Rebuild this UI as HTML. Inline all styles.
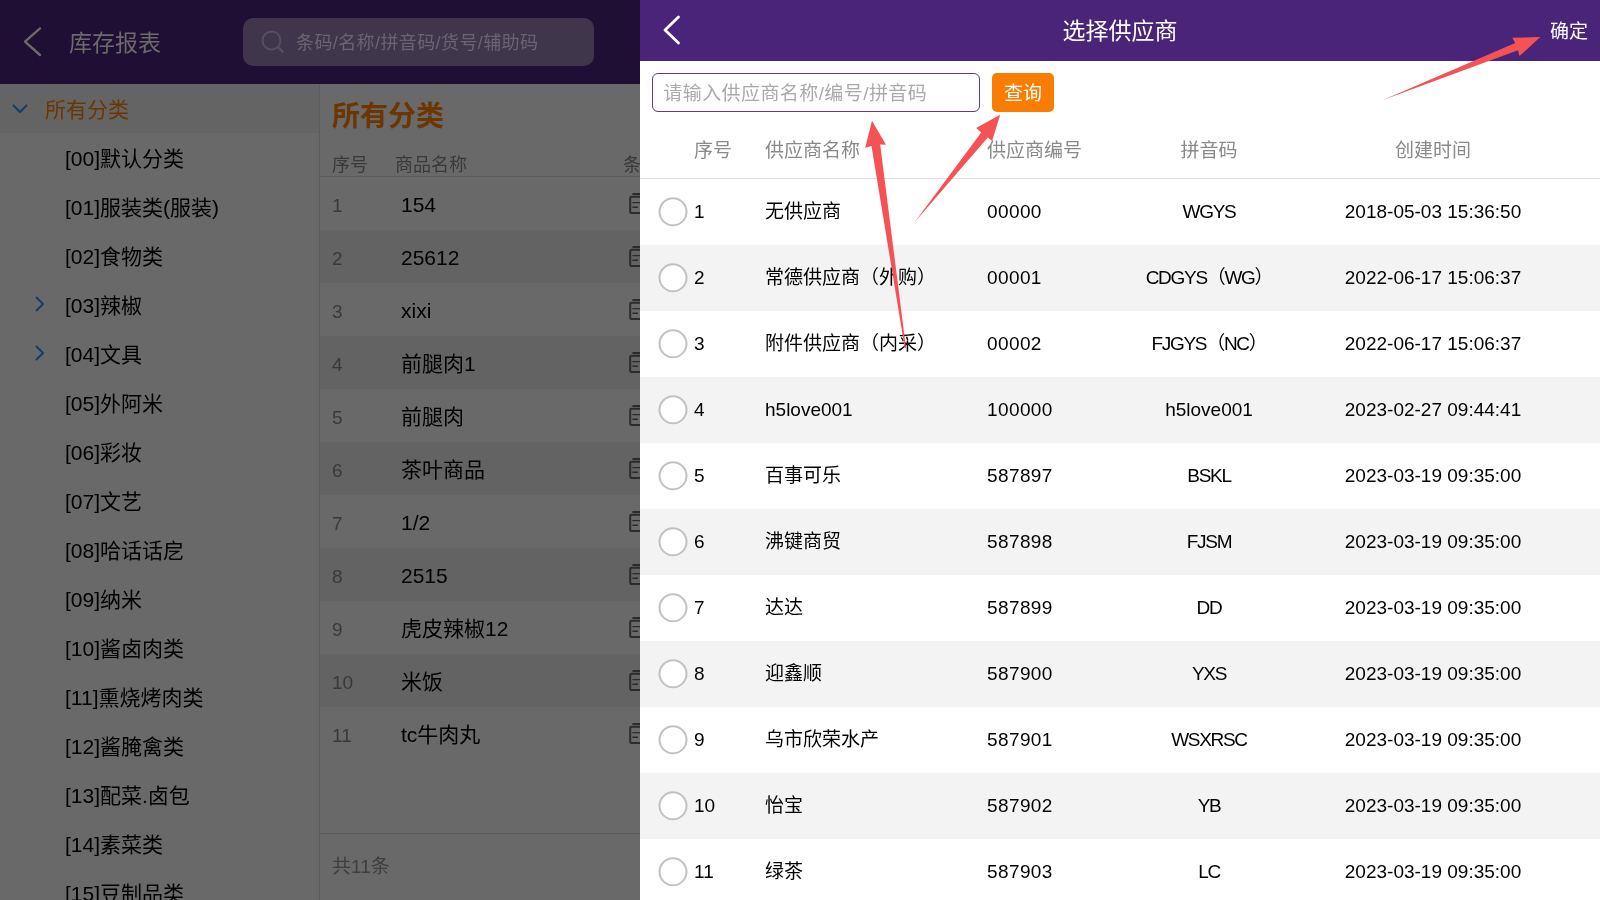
<!DOCTYPE html>
<html lang="zh-CN"><head><meta charset="utf-8"><title>选择供应商</title>
<style>
*{box-sizing:border-box;margin:0;padding:0}
html,body{width:1600px;height:900px;overflow:hidden;background:#fff}
body{position:relative;font-family:"Liberation Sans","Noto Sans CJK SC",sans-serif;color:#000}
#left{position:absolute;left:0;top:0;width:640px;height:900px;background:#696969;overflow:hidden}
.lhead{position:absolute;left:0;top:0;width:640px;height:84px;background:#1f0f34}
.lback{position:absolute;left:20px;top:25px}
.ltitle{position:absolute;left:69px;top:23px;height:40px;line-height:40px;font-size:23px;color:#6b6b6b}
.lsearch{position:absolute;left:243px;top:18px;width:351px;height:48px;border-radius:10px;background:#40364c}
.lsearch svg{position:absolute;left:16px;top:10.4px}
.lsearch span{position:absolute;left:53px;top:0;line-height:50px;font-size:18px;color:#6b6472;white-space:nowrap;letter-spacing:.4px}
.side{position:absolute;left:0;top:84px;width:319px;height:816px;background:#696969}
.sall{position:absolute;left:0;top:0;width:319px;height:49px;background:#646464}
.sall svg{position:absolute;left:11.5px;top:20px}
.sall span{position:absolute;left:45px;top:0;line-height:51px;font-size:21px;color:#6b3600}
.cat{position:absolute;left:0;width:319px;height:49px;line-height:51px;padding-left:65px;font-size:21px;color:#000;white-space:nowrap}
.cat .exp{position:absolute;left:34.6px;top:16.3px}
.vline{position:absolute;left:319px;top:84px;width:1px;height:816px;background:#5c5c5c}
.main{position:absolute;left:320px;top:84px;width:320px;height:816px;background:#696969;overflow:hidden}
.mtitle{position:absolute;left:12px;top:12px;line-height:42px;font-size:28px;font-weight:bold;color:#6b3600}
.mth{position:absolute;left:0;top:66px;width:320px;height:30px;line-height:30px;font-size:18px;color:#393939}
.mth span{position:absolute;top:0;white-space:nowrap}
.mth .c1{left:12px}.mth .c2{left:75px}.mth .c3{left:303px}
.mline{position:absolute;left:0;width:320px;height:1px;background:#5a5a5a}
.mrow{position:absolute;left:0;width:320px;height:53px;line-height:55px}
.mrow.alt{background:#636363}
.mrow .n{position:absolute;left:12px;top:1px;font-size:19px;color:#393939}
.mrow .g{position:absolute;left:81px;top:0;font-size:21px;color:#000;white-space:nowrap}
.mrow .ico{position:absolute;left:308px;top:15px}
.mtotal{position:absolute;left:12px;top:768px;line-height:30px;font-size:19px;color:#3e3e3e}
#right{position:absolute;left:640px;top:0;width:960px;height:900px;background:#fff;overflow:hidden}
.rhead{position:absolute;left:0;top:0;width:960px;height:61px;background:#4a2479}
.rback{position:absolute;left:21px;top:14.4px}
.rtitle{position:absolute;left:0;top:0;width:960px;text-align:center;line-height:63px;font-size:23px;color:#fff}
.rok{position:absolute;right:12px;top:0;line-height:63px;font-size:19px;color:#fff}
.rinput{position:absolute;left:12px;top:73px;width:328px;height:39px;border:1.3px solid #5b3a8e;border-radius:6px;padding-left:10.3px;letter-spacing:.42px;line-height:39px;font-size:19px;color:#aaa;white-space:nowrap;background:#fff}
.rbtn{position:absolute;left:352px;top:73px;width:62px;height:39px;border-radius:5px;background:#f97d00;color:#fff;font-size:19px;text-align:center;line-height:42px}
.rth{position:absolute;left:0;top:120px;width:960px;height:59px;border-bottom:1px solid #dcdcdc;line-height:61px;font-size:19px;color:#8a8a8a}
.rth span,.rrow span{position:absolute;top:0;white-space:nowrap}
.a{left:54px}.b{left:125px}.c{left:347px}
.rrow .c{letter-spacing:.4px}
.up{letter-spacing:-1.3px}
.d{left:469px;width:200px;text-align:center}
.e{left:693px;width:200px;text-align:center}
.rrow{position:absolute;left:0;width:960px;height:66px;line-height:66px;font-size:19px;color:#000}
.rrow.alt{background:#f3f3f3}
.rad{position:absolute;left:19px;top:19px;width:29px;height:29px;border:2px solid #c2c2c2;border-radius:50%;background:#fff;transform:translate(-.5px,-.7px)}
#arrows{position:absolute;left:0;top:0;pointer-events:none}
#left,#right{will-change:transform}

</style></head><body>
<div id="left">
<div class="lhead"></div>
<svg class="lback" width="24" height="34" viewBox="0 0 24 34"><path d="M20 3.4 L5 16.6 L20 30" fill="none" stroke="#6b6b6b" stroke-width="2.4" stroke-linecap="round" stroke-linejoin="round"/></svg>
<div class="ltitle">库存报表</div>
<div class="lsearch"><svg width="30" height="30" viewBox="0 0 30 30"><circle cx="12.5" cy="12.5" r="9" fill="none" stroke="#584e64" stroke-width="2"/><path d="M19.3 19.3 L23.6 23.6" stroke="#584e64" stroke-width="2.4" stroke-linecap="round"/></svg><span>条码/名称/拼音码/货号/辅助码</span></div>
<div class="side">
<div class="sall"><svg width="16" height="10" viewBox="0 0 16 10"><path d="M1.5 1.5 L8 8 L14.5 1.5" fill="none" stroke="#133f66" stroke-width="2" stroke-linecap="round" stroke-linejoin="round"/></svg><span>所有分类</span></div>
<div class="cat" style="top:49px">[00]默认分类</div>
<div class="cat" style="top:98px">[01]服装类(服装)</div>
<div class="cat" style="top:147px">[02]食物类</div>
<div class="cat" style="top:196px"><svg class="exp" width="10" height="16" viewBox="0 0 10 16"><path d="M1.5 1.5 L8 8 L1.5 14.5" fill="none" stroke="#133f66" stroke-width="2" stroke-linecap="round" stroke-linejoin="round"/></svg>[03]辣椒</div>
<div class="cat" style="top:245px"><svg class="exp" width="10" height="16" viewBox="0 0 10 16"><path d="M1.5 1.5 L8 8 L1.5 14.5" fill="none" stroke="#133f66" stroke-width="2" stroke-linecap="round" stroke-linejoin="round"/></svg>[04]文具</div>
<div class="cat" style="top:294px">[05]外阿米</div>
<div class="cat" style="top:343px">[06]彩妆</div>
<div class="cat" style="top:392px">[07]文艺</div>
<div class="cat" style="top:441px">[08]哈话话戹</div>
<div class="cat" style="top:490px">[09]纳米</div>
<div class="cat" style="top:539px">[10]酱卤肉类</div>
<div class="cat" style="top:588px">[11]熏烧烤肉类</div>
<div class="cat" style="top:637px">[12]酱腌禽类</div>
<div class="cat" style="top:686px">[13]配菜.卤包</div>
<div class="cat" style="top:735px">[14]素菜类</div>
<div class="cat" style="top:784px">[15]豆制品类</div>
</div>
<div class="vline"></div>
<div class="main">
<div class="mtitle">所有分类</div>
<div class="mth"><span class="c1">序号</span><span class="c2">商品名称</span><span class="c3">条码</span></div>
<div class="mline" style="top:92px"></div>
<div class="mrow" style="top:93px"><span class="n">1</span><span class="g">154</span><svg class="ico" width="22" height="24" viewBox="0 0 22 24"><rect x="2.2" y="4.8" width="20" height="16.2" rx="1.2" fill="none" stroke="#2b2b2b" stroke-width="2"/><path d="M4.4 2 H14" stroke="#2b2b2b" stroke-width="2"/><path d="M4.4 10.65 H13 M4.4 15.2 H10" stroke="#2b2b2b" stroke-width="1.4"/></svg></div>
<div class="mrow alt" style="top:146px"><span class="n">2</span><span class="g">25612</span><svg class="ico" width="22" height="24" viewBox="0 0 22 24"><rect x="2.2" y="4.8" width="20" height="16.2" rx="1.2" fill="none" stroke="#2b2b2b" stroke-width="2"/><path d="M4.4 2 H14" stroke="#2b2b2b" stroke-width="2"/><path d="M4.4 10.65 H13 M4.4 15.2 H10" stroke="#2b2b2b" stroke-width="1.4"/></svg></div>
<div class="mrow" style="top:199px"><span class="n">3</span><span class="g">xixi</span><svg class="ico" width="22" height="24" viewBox="0 0 22 24"><rect x="2.2" y="4.8" width="20" height="16.2" rx="1.2" fill="none" stroke="#2b2b2b" stroke-width="2"/><path d="M4.4 2 H14" stroke="#2b2b2b" stroke-width="2"/><path d="M4.4 10.65 H13 M4.4 15.2 H10" stroke="#2b2b2b" stroke-width="1.4"/></svg></div>
<div class="mrow alt" style="top:252px"><span class="n">4</span><span class="g">前腿肉1</span><svg class="ico" width="22" height="24" viewBox="0 0 22 24"><rect x="2.2" y="4.8" width="20" height="16.2" rx="1.2" fill="none" stroke="#2b2b2b" stroke-width="2"/><path d="M4.4 2 H14" stroke="#2b2b2b" stroke-width="2"/><path d="M4.4 10.65 H13 M4.4 15.2 H10" stroke="#2b2b2b" stroke-width="1.4"/></svg></div>
<div class="mrow" style="top:305px"><span class="n">5</span><span class="g">前腿肉</span><svg class="ico" width="22" height="24" viewBox="0 0 22 24"><rect x="2.2" y="4.8" width="20" height="16.2" rx="1.2" fill="none" stroke="#2b2b2b" stroke-width="2"/><path d="M4.4 2 H14" stroke="#2b2b2b" stroke-width="2"/><path d="M4.4 10.65 H13 M4.4 15.2 H10" stroke="#2b2b2b" stroke-width="1.4"/></svg></div>
<div class="mrow alt" style="top:358px"><span class="n">6</span><span class="g">茶叶商品</span><svg class="ico" width="22" height="24" viewBox="0 0 22 24"><rect x="2.2" y="4.8" width="20" height="16.2" rx="1.2" fill="none" stroke="#2b2b2b" stroke-width="2"/><path d="M4.4 2 H14" stroke="#2b2b2b" stroke-width="2"/><path d="M4.4 10.65 H13 M4.4 15.2 H10" stroke="#2b2b2b" stroke-width="1.4"/></svg></div>
<div class="mrow" style="top:411px"><span class="n">7</span><span class="g">1/2</span><svg class="ico" width="22" height="24" viewBox="0 0 22 24"><rect x="2.2" y="4.8" width="20" height="16.2" rx="1.2" fill="none" stroke="#2b2b2b" stroke-width="2"/><path d="M4.4 2 H14" stroke="#2b2b2b" stroke-width="2"/><path d="M4.4 10.65 H13 M4.4 15.2 H10" stroke="#2b2b2b" stroke-width="1.4"/></svg></div>
<div class="mrow alt" style="top:464px"><span class="n">8</span><span class="g">2515</span><svg class="ico" width="22" height="24" viewBox="0 0 22 24"><rect x="2.2" y="4.8" width="20" height="16.2" rx="1.2" fill="none" stroke="#2b2b2b" stroke-width="2"/><path d="M4.4 2 H14" stroke="#2b2b2b" stroke-width="2"/><path d="M4.4 10.65 H13 M4.4 15.2 H10" stroke="#2b2b2b" stroke-width="1.4"/></svg></div>
<div class="mrow" style="top:517px"><span class="n">9</span><span class="g">虎皮辣椒12</span><svg class="ico" width="22" height="24" viewBox="0 0 22 24"><rect x="2.2" y="4.8" width="20" height="16.2" rx="1.2" fill="none" stroke="#2b2b2b" stroke-width="2"/><path d="M4.4 2 H14" stroke="#2b2b2b" stroke-width="2"/><path d="M4.4 10.65 H13 M4.4 15.2 H10" stroke="#2b2b2b" stroke-width="1.4"/></svg></div>
<div class="mrow alt" style="top:570px"><span class="n">10</span><span class="g">米饭</span><svg class="ico" width="22" height="24" viewBox="0 0 22 24"><rect x="2.2" y="4.8" width="20" height="16.2" rx="1.2" fill="none" stroke="#2b2b2b" stroke-width="2"/><path d="M4.4 2 H14" stroke="#2b2b2b" stroke-width="2"/><path d="M4.4 10.65 H13 M4.4 15.2 H10" stroke="#2b2b2b" stroke-width="1.4"/></svg></div>
<div class="mrow" style="top:623px"><span class="n">11</span><span class="g">tc牛肉丸</span><svg class="ico" width="22" height="24" viewBox="0 0 22 24"><rect x="2.2" y="4.8" width="20" height="16.2" rx="1.2" fill="none" stroke="#2b2b2b" stroke-width="2"/><path d="M4.4 2 H14" stroke="#2b2b2b" stroke-width="2"/><path d="M4.4 10.65 H13 M4.4 15.2 H10" stroke="#2b2b2b" stroke-width="1.4"/></svg></div>
<div class="mline" style="top:749px"></div>
<div class="mtotal">共11条</div>
</div>
</div>
<div id="right">
<div class="rhead"><svg class="rback" width="22" height="32" viewBox="0 0 22 32"><path d="M17.5 3 L4 16 L17.5 29" fill="none" stroke="#fff" stroke-width="2.8" stroke-linecap="round" stroke-linejoin="round"/></svg><div class="rtitle">选择供应商</div><div class="rok">确定</div></div>
<div class="rinput">请输入供应商名称/编号/拼音码</div>
<div class="rbtn">查询</div>
<div class="rth"><span class="a">序号</span><span class="b">供应商名称</span><span class="c">供应商编号</span><span class="d">拼音码</span><span class="e">创建时间</span></div>
<div class="rrow" style="top:179px"><i class="rad"></i><span class="a">1</span><span class="b">无供应商</span><span class="c">00000</span><span class="d up">WGYS</span><span class="e">2018-05-03 15:36:50</span></div>
<div class="rrow alt" style="top:245px"><i class="rad"></i><span class="a">2</span><span class="b">常德供应商（外购）</span><span class="c">00001</span><span class="d up">CDGYS（WG）</span><span class="e">2022-06-17 15:06:37</span></div>
<div class="rrow" style="top:311px"><i class="rad"></i><span class="a">3</span><span class="b">附件供应商（内采）</span><span class="c">00002</span><span class="d up">FJGYS（NC）</span><span class="e">2022-06-17 15:06:37</span></div>
<div class="rrow alt" style="top:377px"><i class="rad"></i><span class="a">4</span><span class="b">h5love001</span><span class="c">100000</span><span class="d">h5love001</span><span class="e">2023-02-27 09:44:41</span></div>
<div class="rrow" style="top:443px"><i class="rad"></i><span class="a">5</span><span class="b">百事可乐</span><span class="c">587897</span><span class="d up">BSKL</span><span class="e">2023-03-19 09:35:00</span></div>
<div class="rrow alt" style="top:509px"><i class="rad"></i><span class="a">6</span><span class="b">沸键商贸</span><span class="c">587898</span><span class="d up">FJSM</span><span class="e">2023-03-19 09:35:00</span></div>
<div class="rrow" style="top:575px"><i class="rad"></i><span class="a">7</span><span class="b">达达</span><span class="c">587899</span><span class="d up">DD</span><span class="e">2023-03-19 09:35:00</span></div>
<div class="rrow alt" style="top:641px"><i class="rad"></i><span class="a">8</span><span class="b">迎鑫顺</span><span class="c">587900</span><span class="d up">YXS</span><span class="e">2023-03-19 09:35:00</span></div>
<div class="rrow" style="top:707px"><i class="rad"></i><span class="a">9</span><span class="b">乌市欣荣水产</span><span class="c">587901</span><span class="d up">WSXRSC</span><span class="e">2023-03-19 09:35:00</span></div>
<div class="rrow alt" style="top:773px"><i class="rad"></i><span class="a">10</span><span class="b">怡宝</span><span class="c">587902</span><span class="d up">YB</span><span class="e">2023-03-19 09:35:00</span></div>
<div class="rrow" style="top:839px"><i class="rad"></i><span class="a">11</span><span class="b">绿茶</span><span class="c">587903</span><span class="d up">LC</span><span class="e">2023-03-19 09:35:00</span></div>
</div>
<svg id="arrows" width="1600" height="900" viewBox="0 0 1600 900">
<g fill="#f55255">
<path d="M906 348 L904.8 348.2 L871.5 146 L865.2 147.8 L872 120.8 L886 144.8 L880.2 144.5 Z"/>
<path d="M914.6 222.2 L981.2 132.4 L976.1 128.1 L1000.2 114.8 L992.1 141.1 L987.8 137.5 Z"/>
<path d="M1382.9 99.9 L1515.2 43.1 L1512.3 37.7 L1540.3 37.1 L1519.5 56.1 L1518 50.3 Z"/>
</g></svg>
</body></html>
